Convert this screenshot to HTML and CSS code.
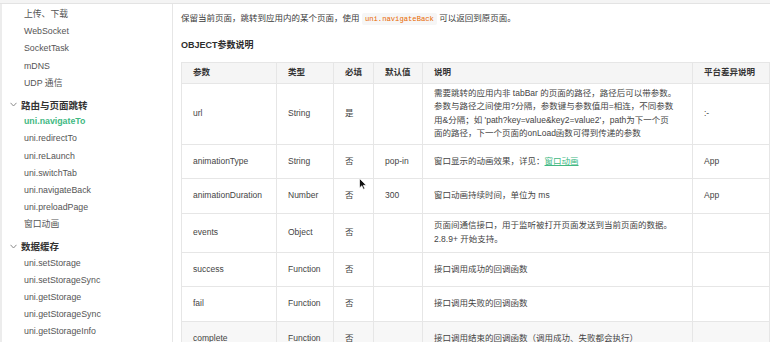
FILE: index.html
```html
<!DOCTYPE html>
<html lang="zh">
<head>
    <meta charset="UTF-8">
    <title>uni.navigateTo</title>
    <link rel="stylesheet" href="styles.css">
</head>
<body>
    <div class="topbar"></div>
    <div class="page">
        <div class="sidebar">
            <div class="item">上传、下载</div>
            <div class="item">WebSocket</div>
            <div class="item">SocketTask</div>
            <div class="item">mDNS</div>
            <div class="item">UDP 通信</div>
            <div class="group">
                <svg class="chevron" width="7" height="5" viewBox="0 0 7 5"><polyline points="0.5,0.8 3.5,4 6.5,0.8" fill="none" stroke="#8a8a8a" stroke-width="1"/></svg>
                路由与页面跳转
            </div>
            <div class="item active">uni.navigateTo</div>
            <div class="item">uni.redirectTo</div>
            <div class="item">uni.reLaunch</div>
            <div class="item">uni.switchTab</div>
            <div class="item">uni.navigateBack</div>
            <div class="item">uni.preloadPage</div>
            <div class="item">窗口动画</div>
            <div class="group">
                <svg class="chevron" width="7" height="5" viewBox="0 0 7 5"><polyline points="0.5,0.8 3.5,4 6.5,0.8" fill="none" stroke="#8a8a8a" stroke-width="1"/></svg>
                数据缓存
            </div>
            <div class="item">uni.setStorage</div>
            <div class="item">uni.setStorageSync</div>
            <div class="item">uni.getStorage</div>
            <div class="item">uni.getStorageSync</div>
            <div class="item">uni.getStorageInfo</div>
        </div>

        <div class="main">
            <p class="intro">保留当前页面，跳转到应用内的某个页面，使用 <code>uni.navigateBack</code> 可以返回到原页面。</p>
            <h4>OBJECT参数说明</h4>

            <table class="params">
                <colgroup>
                    <col style="width:95px">
                    <col style="width:57px">
                    <col style="width:40px">
                    <col style="width:49px">
                    <col style="width:270px">
                    <col>
                </colgroup>
                <thead>
                    <tr>
                        <th>参数</th>
                        <th>类型</th>
                        <th>必填</th>
                        <th>默认值</th>
                        <th>说明</th>
                        <th>平台差异说明</th>
                    </tr>
                </thead>
                <tbody>
                    <tr>
                        <td>url</td>
                        <td>String</td>
                        <td>是</td>
                        <td></td>
                        <td>需要跳转的应用内非 tabBar 的页面的路径，路径后可以带参数。<br>参数与路径之间使用?分隔，参数键与参数值用=相连，不同参数<br>用&amp;分隔；如 'path?key=value&amp;key2=value2'，path为下一个页<br>面的路径，下一个页面的onLoad函数可得到传递的参数</td>
                        <td>:-</td>
                    </tr>
                    <tr>
                        <td>animationType</td>
                        <td>String</td>
                        <td>否</td>
                        <td>pop-in</td>
                        <td>窗口显示的动画效果，详见：<a href="#">窗口动画</a></td>
                        <td>App</td>
                    </tr>
                    <tr>
                        <td>animationDuration</td>
                        <td>Number</td>
                        <td>否</td>
                        <td>300</td>
                        <td>窗口动画持续时间，单位为 ms</td>
                        <td>App</td>
                    </tr>
                    <tr class="tall">
                        <td>events</td>
                        <td>Object</td>
                        <td>否</td>
                        <td></td>
                        <td>页面间通信接口，用于监听被打开页面发送到当前页面的数据。<br>2.8.9+ 开始支持。</td>
                        <td></td>
                    </tr>
                    <tr>
                        <td>success</td>
                        <td>Function</td>
                        <td>否</td>
                        <td></td>
                        <td>接口调用成功的回调函数</td>
                        <td></td>
                    </tr>
                    <tr>
                        <td>fail</td>
                        <td>Function</td>
                        <td>否</td>
                        <td></td>
                        <td>接口调用失败的回调函数</td>
                        <td></td>
                    </tr>
                    <tr class="shaded">
                        <td>complete</td>
                        <td>Function</td>
                        <td>否</td>
                        <td></td>
                        <td>接口调用结束的回调函数（调用成功、失败都会执行）</td>
                        <td></td>
                    </tr>
                </tbody>
            </table>

            <svg class="cursor" width="8" height="12" viewBox="0 0 8 12"><path d="M0.5,0.5 L0.5,10 L2.8,7.8 L4.4,11.3 L5.8,10.7 L4.3,7.3 L7.3,7.3 Z" fill="#111" stroke="#fff" stroke-width="0.7"/></svg>
        </div>
    </div>
</body>
</html>
```

FILE: styles.css
```css
* {
    margin: 0;
    padding: 0;
    box-sizing: border-box;
}

body {
    font-family: 'Liberation Sans', 'Noto Sans CJK SC', sans-serif;
    font-size: 8.5px;
    color: #3a3a3a;
    background: #fff;
    width: 770px;
    height: 342px;
    overflow: hidden;
}

.topbar {
    height: 4px;
    background: #f4f4f4;
    border-bottom: 1px solid #e3e3e3;
}

.page {
    display: flex;
    border-left: 2px solid #ececec;
    height: 338px;
}

/* sidebar */
.sidebar {
    width: 171px;
    flex-shrink: 0;
    border-right: 1px solid #e6e6e6;
    padding-top: 2px;
}

.item {
    height: 17.2px;
    line-height: 17.2px;
    padding-left: 22px;
    font-size: 8.8px;
    color: #555;
    white-space: nowrap;
}

.item.active {
    color: #42b983;
    font-weight: bold;
}

.group {
    display: flex;
    align-items: center;
    height: 17.2px;
    margin-top: 4px;
    padding-left: 8px;
    font-size: 9.5px;
    font-weight: bold;
    color: #333;
}

.chevron {
    margin-right: 4px;
}

/* main */
.main {
    position: relative;
    flex: 1;
    padding: 7px 0 0 8px;
}

.intro {
    line-height: 14px;
    color: #3a3a3a;
}

.intro code {
    font-family: 'Liberation Mono', monospace;
    font-size: 7.2px;
    color: #e96900;
    background: #f6f6f6;
    padding: 2px 3px;
    border-radius: 2px;
}

h4 {
    margin-top: 12px;
    font-size: 9px;
    line-height: 14px;
    font-weight: bold;
    color: #2c2c2c;
}

.params {
    margin-top: 10px;
    width: 589px;
    table-layout: fixed;
    border-collapse: collapse;
}

.params th,
.params td {
    border: 1px solid #e6e6e6;
    padding: 3px 11px;
    line-height: 13.5px;
    text-align: left;
    vertical-align: middle;
}

.params th {
    background: #f5f5f5;
    font-weight: bold;
    color: #333;
    height: 20px;
}

.params td {
    height: 34.5px;
    color: #444;
}

.params .tall td {
    height: 39px;
}

.params .shaded td {
    background: #f7f7f7;
}

.params a {
    color: #42b983;
    text-decoration: underline;
}

.cursor {
    position: absolute;
    left: 186px;
    top: 174px;
}
```
